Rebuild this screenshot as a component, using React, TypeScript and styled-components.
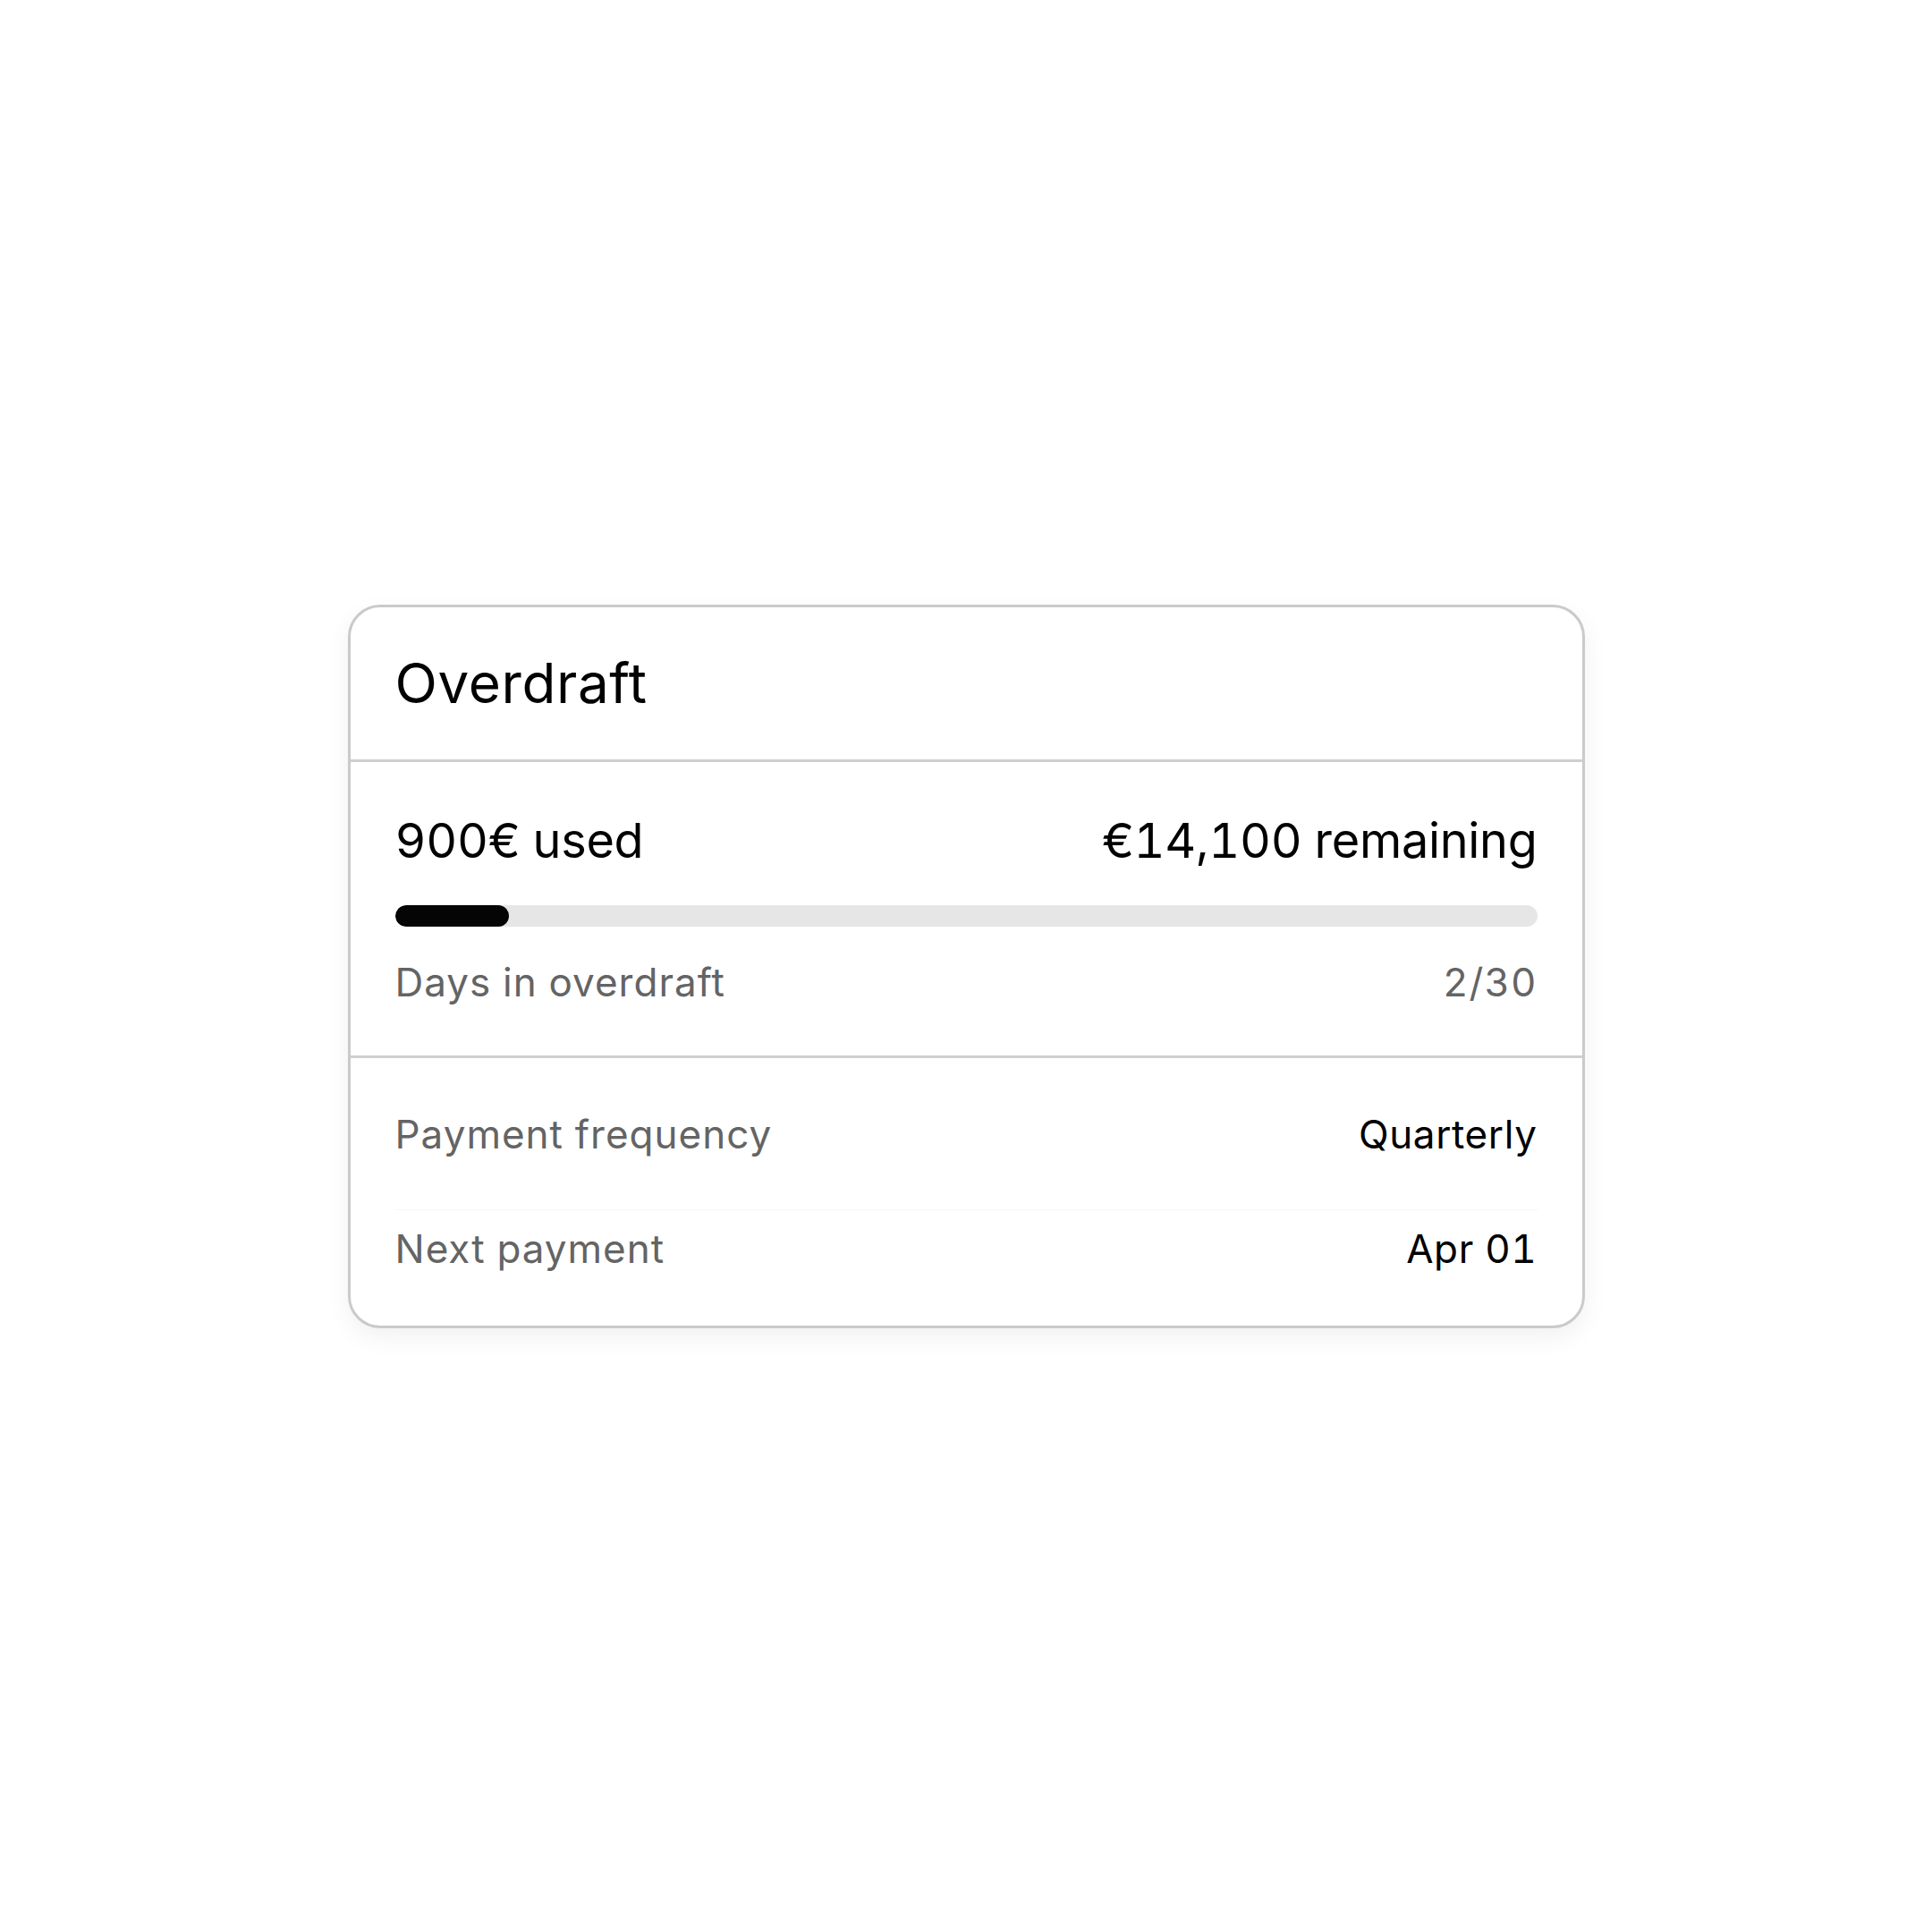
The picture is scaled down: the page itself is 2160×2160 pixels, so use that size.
import styled, { createGlobalStyle } from 'styled-components';

const GlobalStyle = createGlobalStyle`
  html, body {
    margin: 0;
    padding: 0;
    background: #ffffff;
  }

  body {
    font-family: Inter, 'Liberation Sans', Arial, sans-serif;
    color: #000000;
    -webkit-font-smoothing: antialiased;
    font-variant-numeric: tabular-nums;
  }
`;

interface Detail {
  label: string;
  value: string;
}

const limit = 15000;
const used = 900;
const daysUsed = 2;
const daysAllowed = 30;

const details: Detail[] = [
  { label: 'Payment frequency', value: 'Quarterly' },
  { label: 'Next payment', value: 'Apr 01' },
];

const formatRemaining = (value: number) => `€${value.toLocaleString('en-US')}`;

const App = () => {
  // keep a minimum fill so a small balance is still visible
  const usedShare = Math.max(used / limit, 0.1);

  return (
    <>
      <GlobalStyle />
      <Page>
        <Card>
          <Header>
            <Title>Overdraft</Title>
          </Header>

          <Usage>
            <SplitRow>
              <Amount>{used}€ used</Amount>
              <Amount>{formatRemaining(limit - used)} remaining</Amount>
            </SplitRow>
            <Track>
              <Fill style={{ width: `${usedShare * 100}%` }} />
            </Track>
            <SplitRow>
              <Label>Days in overdraft</Label>
              <Label>
                {daysUsed}/{daysAllowed}
              </Label>
            </SplitRow>
          </Usage>

          <DetailList>
            {details.map((item, index) => (
              <DetailRow key={item.label} $divided={index < details.length - 1}>
                <Label>{item.label}</Label>
                <Value>{item.value}</Value>
              </DetailRow>
            ))}
          </DetailList>
        </Card>
      </Page>
    </>
  );
};

const Page = styled.main`
  min-height: 100vh;
  display: flex;
  align-items: center;
  justify-content: center;
`;

const Card = styled.section`
  width: 1383px;
  box-sizing: border-box;
  display: flex;
  flex-direction: column;
  background: #ffffff;
  border: 3px solid #cacaca;
  border-radius: 36px;
  box-shadow: 0 10px 28px rgba(0, 0, 0, 0.06);
  overflow: hidden;
`;

const Header = styled.header`
  height: 170px;
  padding: 0 50px;
  display: flex;
  align-items: center;
  border-bottom: 3px solid #cfcfcf;
`;

const Title = styled.h1`
  margin: 0;
  font-size: 62px;
  line-height: 1;
  font-weight: 400;
  letter-spacing: 0.6px;
`;

const Usage = styled.div`
  padding: 61px 50px 60px;
  display: flex;
  flex-direction: column;
  border-bottom: 3px solid #cfcfcf;
`;

const SplitRow = styled.div`
  display: flex;
  justify-content: space-between;
  align-items: center;
`;

const Amount = styled.span`
  font-size: 54px;
  line-height: 1;
  font-weight: 400;
  letter-spacing: -0.3px;
`;

const Track = styled.div`
  height: 24px;
  margin: 45px 0 40px;
  border-radius: 12px;
  background: #e6e6e6;
  overflow: hidden;
`;

const Fill = styled.div`
  height: 100%;
  border-radius: 12px;
  background: #050505;
`;

const Label = styled.span`
  font-size: 44px;
  line-height: 1;
  color: #646464;
  letter-spacing: 1px;
`;

const Value = styled.span`
  font-size: 44px;
  line-height: 1;
  color: #000000;
  letter-spacing: 0.6px;
`;

const DetailList = styled.div`
  padding: 63px 50px 64px;
  display: flex;
  flex-direction: column;
`;

const DetailRow = styled.div<{ $divided: boolean }>`
  display: flex;
  justify-content: space-between;
  align-items: center;
  padding: ${({ $divided }) => ($divided ? '0 0 62px' : '21px 0 0')};
  border-bottom: ${({ $divided }) => ($divided ? '1px solid #f6f6f6' : 'none')};
`;

export default App;
